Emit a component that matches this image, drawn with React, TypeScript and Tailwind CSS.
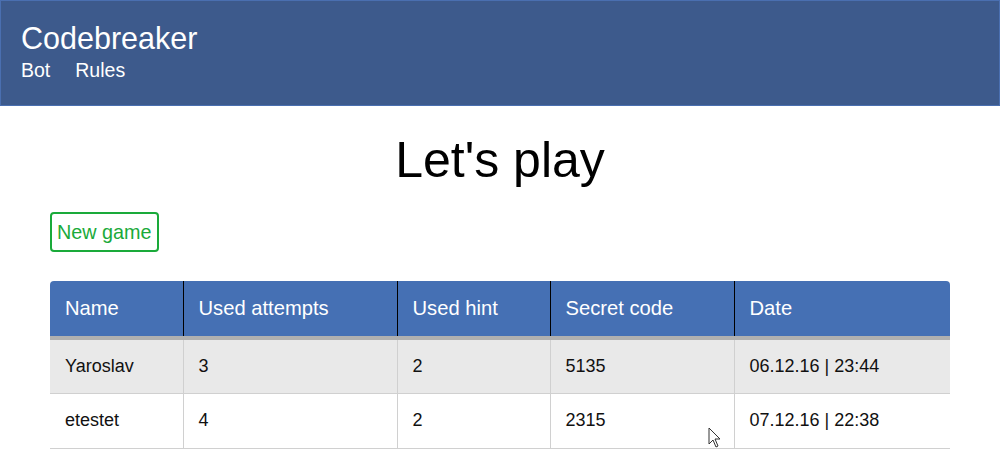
import React from "react"

const rows = [
  { name: "Yaroslav", attempts: 3, hint: 2, code: "5135", date: "06.12.16 | 23:44" },
  { name: "etestet", attempts: 4, hint: 2, code: "2315", date: "07.12.16 | 22:38" },
]

const cols = ["w-[133px]", "w-[214px]", "w-[153px]", "w-[184px]", ""]

export default function App() {
  return (
    <div className="relative w-[1000px] h-[450px] overflow-hidden bg-white font-['Liberation_Sans',Arial,sans-serif]">
      <header className="h-[106px] bg-[#3d5a8c] border border-[#4a6fb0] px-5 pt-[19px]">
        <div className="text-white text-[30.5px] leading-[37px]">Codebreaker</div>
        <nav className="flex gap-[25px] text-white text-[19.5px] leading-[22px] mt-[2px]">
          <span>Bot</span>
          <span>Rules</span>
        </nav>
      </header>

      <main className="px-[50px]">
        <h1 className="text-center text-[50px] leading-[56px] pt-[26px] text-black">Let's play</h1>
        <button className="mt-[24px] border-2 border-[#1aaa3a] rounded-[4px] text-[#1aaa3a] text-[19.8px] leading-[22px] px-[5px] py-[7px]">
          New game
        </button>

        <table className="mt-[29px] w-[900px] border-collapse text-[18px]">
          <thead>
            <tr className="bg-[#4570b4] text-white h-[57px] border-b-[4px] border-[#b0b0b0] text-[20.2px]">
              {["Name", "Used attempts", "Used hint", "Secret code", "Date"].map((h, i) => (
                <th
                  key={h}
                  className={`${cols[i]} text-left font-normal pl-[15px] ${i > 0 ? "border-l border-black" : ""} ${i === 0 ? "rounded-tl-[4px]" : ""} ${i === 4 ? "rounded-tr-[4px]" : ""}`}
                >
                  {h}
                </th>
              ))}
            </tr>
          </thead>
          <tbody>
            {rows.map((r, idx) => (
              <tr key={r.name} className={`h-[55px] border-b border-[#d0d0d0] ${idx === 0 ? "bg-[#e9e9e9]" : "bg-white"}`}>
                {[r.name, r.attempts, r.hint, r.code, r.date].map((v, i) => (
                  <td key={i} className={`pl-[15px] text-[#111] ${i > 0 ? "border-l border-[#d0d0d0]" : ""}`}>
                    {v}
                  </td>
                ))}
              </tr>
            ))}
          </tbody>
        </table>
      </main>

      <svg className="absolute left-[708px] top-[427px]" width="14" height="22" viewBox="0 0 14 22">
        <path d="M1 1 L1 17 L5 13 L8 20 L10 19 L7 12 L12 12 Z" fill="white" stroke="#333" strokeWidth="1" />
      </svg>
    </div>
  )
}
